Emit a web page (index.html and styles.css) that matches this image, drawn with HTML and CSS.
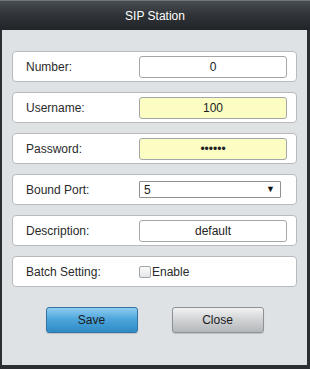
FILE: index.html
```html
<!DOCTYPE html>
<html lang="en">
<head>
    <meta charset="UTF-8">
    <title>SIP Station</title>
    <link rel="stylesheet" href="styles.css">
</head>
<body>
    <div class="dialog">
        <div class="title">SIP Station</div>
        <div class="panel">
            <div class="row">
                <label>Number:</label>
                <input type="text" class="field" value="0">
            </div>
            <div class="row">
                <label>Username:</label>
                <input type="text" class="field required" value="100">
            </div>
            <div class="row">
                <label>Password:</label>
                <input type="password" class="field required" value="123456">
            </div>
            <div class="row">
                <label>Bound Port:</label>
                <span class="select-wrap">
                    <select class="select">
                        <option>5</option>
                    </select>
                    <span class="arrow">▼</span>
                </span>
            </div>
            <div class="row">
                <label>Description:</label>
                <input type="text" class="field" value="default">
            </div>
            <div class="row">
                <label>Batch Setting:</label>
                <span class="check"><input type="checkbox" class="box">Enable</span>
            </div>
            <div class="actions">
                <button class="btn save">Save</button>
                <button class="btn close">Close</button>
            </div>
        </div>
    </div>
</body>
</html>
```
FILE: styles.css
```css
* {
    box-sizing: border-box;
}
body {
    margin: 0;
    font-family: 'Liberation Sans', Arial, sans-serif;
    font-size: 12px;
    color: #222;
    background: #2a2d31;
}
.dialog {
    width: 310px;
    height: 369px;
    display: flex;
    flex-direction: column;
    background: #26292d;
    border-left: 2px solid #2b2f33;
    border-right: 3px solid #2b2f33;
    border-bottom: 4px solid #2b2f33;
}
.title {
    height: 30px;
    margin: 0 -3px 0 -2px;
    display: flex;
    justify-content: center;
    align-items: center;
    color: #fff;
    font-size: 12px;
    border-top: 1px solid #70757b;
    background: linear-gradient(#474c52, #2f3337 50%, #212428);
}
.panel {
    flex: 1;
    background: #dfe2e5;
    padding: 21px 10px 0 10px;
    display: flex;
    flex-direction: column;
    gap: 10px;
}
.row {
    height: 31px;
    background: #fff;
    border: 1px solid #b7bbbf;
    border-radius: 4px;
    display: flex;
    align-items: center;
    padding-left: 13px;
}
.row label {
    width: 113px;
    color: #2a2a2a;
}
.field {
    width: 148px;
    height: 22px;
    border: 1px solid #a4a7aa;
    border-radius: 3px;
    background: #fff;
    text-align: center;
    font-family: inherit;
    font-size: 12px;
    color: #222;
    padding: 0 4px;
    outline: none;
}
.field.required {
    background: #fbfdc2;
}
.select-wrap {
    position: relative;
    display: inline-block;
}
.select {
    width: 142px;
    height: 17px;
    border: 1px solid #8d9094;
    border-radius: 1px;
    background: #fff;
    appearance: none;
    -webkit-appearance: none;
    font-family: inherit;
    font-size: 12px;
    color: #222;
    padding: 0 4px;
    outline: none;
}
.arrow {
    position: absolute;
    right: 6px;
    top: 3px;
    font-size: 9px;
    color: #111;
    pointer-events: none;
}
.check {
    display: flex;
    align-items: center;
    color: #2a2a2a;
}
.box {
    appearance: none;
    -webkit-appearance: none;
    width: 12px;
    height: 12px;
    margin: 0 1px 0 0;
    border: 1px solid #a2a5a8;
    border-radius: 2px;
    background: linear-gradient(#fafafa, #e4e6e8);
}
.actions {
    display: flex;
    justify-content: center;
    gap: 34px;
    margin-top: 10px;
}
.btn {
    width: 92px;
    height: 26px;
    border-radius: 3px;
    font-family: inherit;
    font-size: 12px;
    color: #1c1c1c;
    cursor: pointer;
    box-shadow: 0 1px 1px rgba(0, 0, 0, 0.15);
}
.save {
    border: 1px solid #3474a2;
    background: linear-gradient(#8fcdef, #4ea6dc 45%, #2f8bc6);
}
.close {
    border: 1px solid #8d9196;
    background: linear-gradient(#f2f2f2, #d0d2d4 50%, #b4b7ba);
}
```
